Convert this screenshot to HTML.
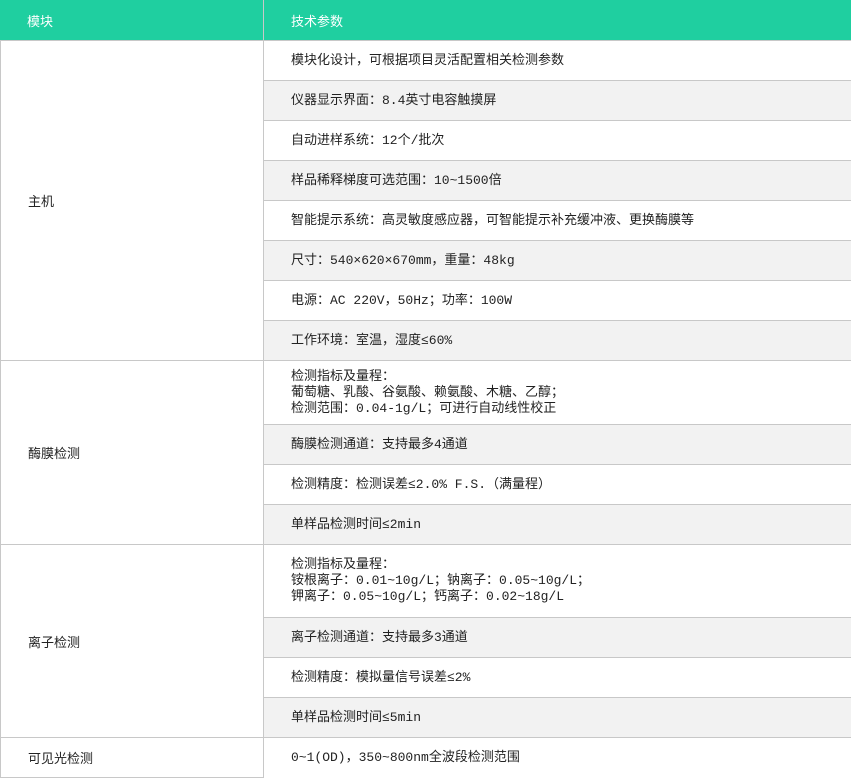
<!DOCTYPE html>
<html><head><meta charset="utf-8"><style>
*{margin:0;padding:0;box-sizing:border-box}
body{width:851px;height:778px;background:#fff;position:relative;overflow:hidden;font-family:"Liberation Mono","WenQuanYi Zen Hei","Noto Sans CJK SC",monospace;font-size:13px;color:#222}
.r{position:absolute;left:263px;right:0;display:flex;align-items:center;padding-left:28px;border-bottom:1px solid #c8c8c8;line-height:16px}
.g{background:#f2f2f2}
.l{position:absolute;left:0;width:263px;display:flex;align-items:center;padding-left:27px;border-bottom:1px solid #c8c8c8;border-left:1px solid #c8c8c8}
.h{position:absolute;top:0;height:41px;background:#1fcfa0;color:#fff;display:flex;align-items:center;border-bottom:1px solid #c8c8c8}
.v{position:absolute;left:263px;top:0;width:1px;height:778px;background:#c8c8c8}
</style></head><body>
<div class="h" style="left:0;width:263px;padding-left:27px">模块</div>
<div class="h" style="left:263px;right:0;padding-left:28px">技术参数</div>
<div class="l" style="top:41px;height:320px">主机</div>
<div class="l" style="top:361px;height:184px">酶膜检测</div>
<div class="l" style="top:545px;height:193px">离子检测</div>
<div class="l" style="top:738px;height:40px">可见光检测</div>
<div class="r" style="top:41px;height:40px">模块化设计，可根据项目灵活配置相关检测参数</div>
<div class="r g" style="top:81px;height:40px">仪器显示界面：8.4英寸电容触摸屏</div>
<div class="r" style="top:121px;height:40px">自动进样系统：12个/批次</div>
<div class="r g" style="top:161px;height:40px">样品稀释梯度可选范围：10~1500倍</div>
<div class="r" style="top:201px;height:40px">智能提示系统：高灵敏度感应器，可智能提示补充缓冲液、更换酶膜等</div>
<div class="r g" style="top:241px;height:40px">尺寸：540×620×670mm，重量：48kg</div>
<div class="r" style="top:281px;height:40px">电源：AC 220V，50Hz；功率：100W</div>
<div class="r g" style="top:321px;height:40px">工作环境：室温，湿度≤60%</div>
<div class="r" style="top:361px;height:64px">检测指标及量程：<br>葡萄糖、乳酸、谷氨酸、赖氨酸、木糖、乙醇；<br>检测范围：0.04-1g/L；可进行自动线性校正</div>
<div class="r g" style="top:425px;height:40px">酶膜检测通道：支持最多4通道</div>
<div class="r" style="top:465px;height:40px">检测精度：检测误差≤2.0% F.S.（满量程）</div>
<div class="r g" style="top:505px;height:40px">单样品检测时间≤2min</div>
<div class="r" style="top:545px;height:73px">检测指标及量程：<br>铵根离子：0.01~10g/L；钠离子：0.05~10g/L；<br>钾离子：0.05~10g/L；钙离子：0.02~18g/L</div>
<div class="r g" style="top:618px;height:40px">离子检测通道：支持最多3通道</div>
<div class="r" style="top:658px;height:40px">检测精度：模拟量信号误差≤2%</div>
<div class="r g" style="top:698px;height:40px">单样品检测时间≤5min</div>
<div class="r" style="top:738px;height:40px;border-bottom:none">0~1(OD)，350~800nm全波段检测范围</div>
<div class="v"></div>
<style>.r{flex-direction:column;align-items:flex-start;justify-content:center}</style>
</body></html>
